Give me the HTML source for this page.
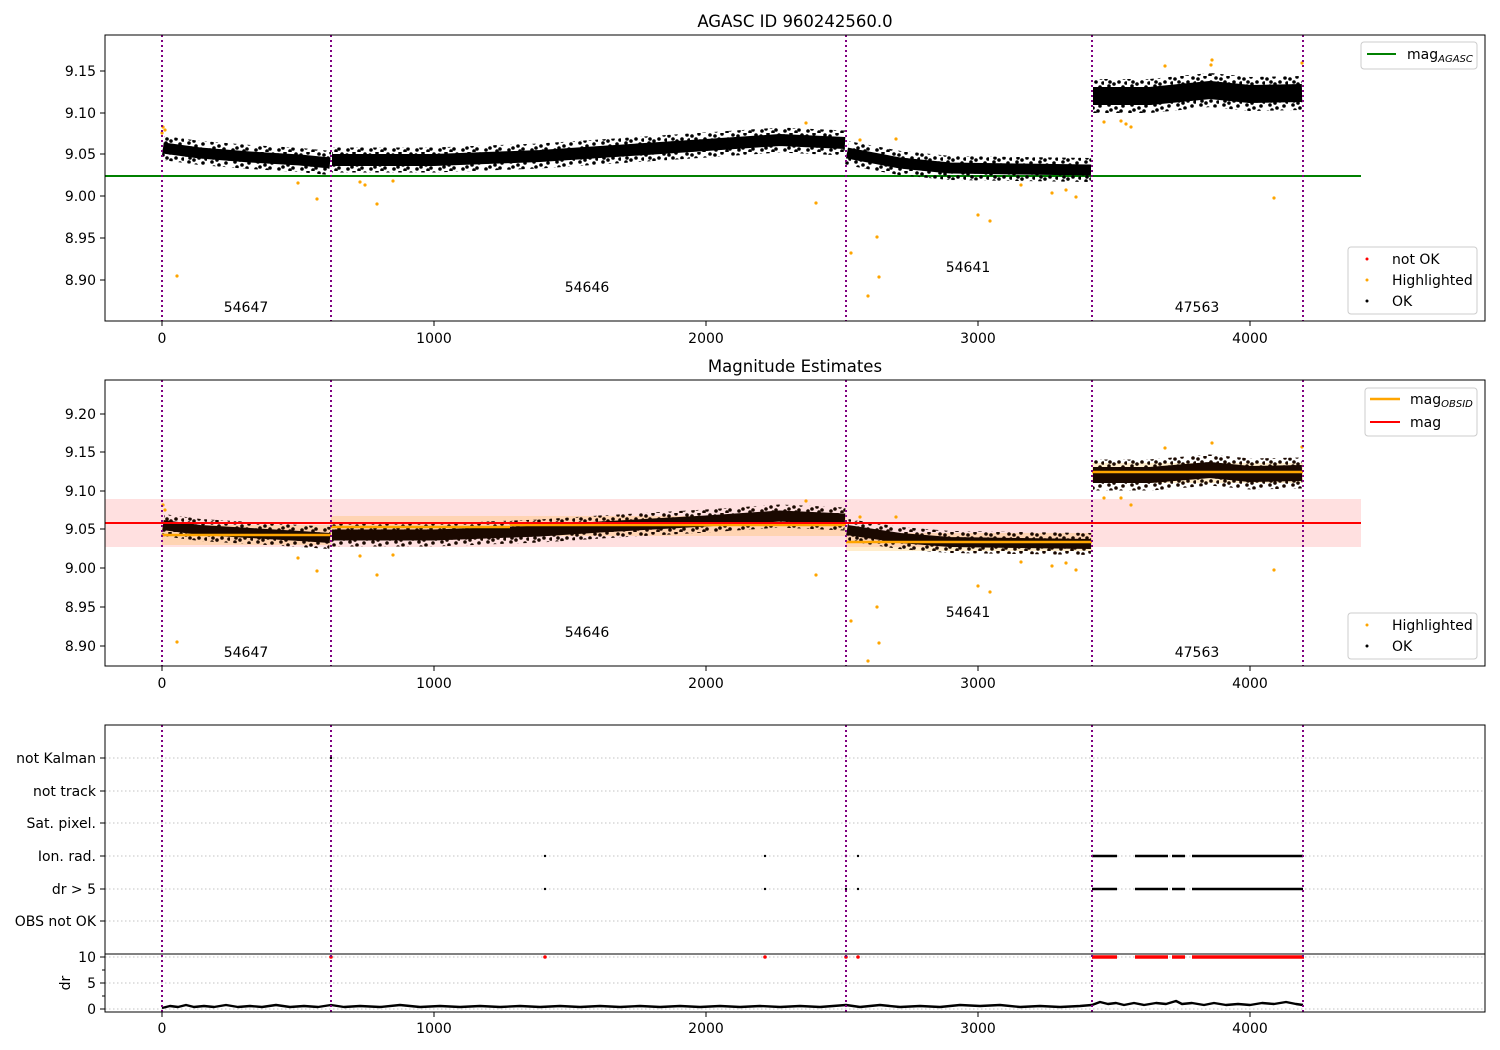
<!DOCTYPE html>
<html><head><meta charset="utf-8"><style>
html,body{margin:0;padding:0;background:#fff;}
svg{display:block;font-family:"DejaVu Sans","Liberation Sans",sans-serif;}
</style></head><body>
<svg width="1500" height="1050" viewBox="0 0 1500 1050" xmlns="http://www.w3.org/2000/svg">
<defs>
<pattern id="dk" width="23" height="19" patternUnits="userSpaceOnUse">
<circle cx="2" cy="3" r="1.8"/><circle cx="9" cy="1" r="1.8"/><circle cx="15" cy="6" r="1.8"/><circle cx="20" cy="2" r="1.8"/><circle cx="5" cy="10" r="1.8"/><circle cx="12" cy="13" r="1.8"/><circle cx="19" cy="11" r="1.8"/><circle cx="3" cy="17" r="1.8"/><circle cx="10" cy="8" r="1.8"/><circle cx="17" cy="16" r="1.8"/><circle cx="22" cy="7" r="1.8"/><circle cx="7" cy="15" r="1.8"/><circle cx="14" cy="18" r="1.8"/><circle cx="6" cy="6" r="1.8"/>
</pattern>
<pattern id="db" width="23" height="19" patternUnits="userSpaceOnUse" fill="#1a0800">
<circle cx="2" cy="3" r="1.8"/><circle cx="9" cy="1" r="1.8"/><circle cx="15" cy="6" r="1.8"/><circle cx="20" cy="2" r="1.8"/><circle cx="5" cy="10" r="1.8"/><circle cx="12" cy="13" r="1.8"/><circle cx="19" cy="11" r="1.8"/><circle cx="3" cy="17" r="1.8"/><circle cx="10" cy="8" r="1.8"/><circle cx="17" cy="16" r="1.8"/><circle cx="22" cy="7" r="1.8"/><circle cx="7" cy="15" r="1.8"/><circle cx="14" cy="18" r="1.8"/><circle cx="6" cy="6" r="1.8"/>
</pattern>
</defs>
<rect width="1500" height="1050" fill="#fff"/>

<!-- ============ PANEL 1 ============ -->
<text x="795" y="27" font-size="16.5" text-anchor="middle">AGASC ID 960242560.0</text>
<line x1="105" y1="176" x2="1361" y2="176" stroke="#008000" stroke-width="2"/>
<g fill="none" stroke="url(#dk)" stroke-linejoin="round" stroke-linecap="butt">
<polyline points="163,148 200,153 250,157 300,160 330,163" stroke-width="24"/>
<polyline points="332,160 434,160 540,156 600,152 706,145 780,140 845,143" stroke-width="25"/>
<polyline points="847,153 900,163 950,168 1020,169 1091,170" stroke-width="24"/>
<polyline points="1093,96 1150,96 1210,90 1250,94 1302,93" stroke-width="34"/>
</g>
<g fill="none" stroke="#000" stroke-linejoin="round" stroke-linecap="butt">
<polyline points="163,148 200,153 250,157 300,160 330,163" stroke-width="11"/>
<polyline points="332,160 434,160 540,156 600,152 706,145 780,140 845,143" stroke-width="12"/>
<polyline points="847,153 900,163 950,168 1020,169 1091,170" stroke-width="11"/>
<polyline points="1093,96 1150,96 1210,90 1250,94 1302,93" stroke-width="18"/>
</g>
<g fill="#ffa500">
<circle cx="163" cy="127" r="1.6"/><circle cx="165" cy="130" r="1.6"/><circle cx="162" cy="133" r="1.6"/><circle cx="177" cy="276" r="1.6"/><circle cx="298" cy="183" r="1.6"/><circle cx="317" cy="199" r="1.6"/><circle cx="360" cy="182" r="1.6"/><circle cx="365" cy="185" r="1.6"/><circle cx="377" cy="204" r="1.6"/><circle cx="393" cy="181" r="1.6"/><circle cx="806" cy="123" r="1.6"/><circle cx="816" cy="203" r="1.6"/><circle cx="851" cy="253" r="1.6"/><circle cx="860" cy="140" r="1.6"/><circle cx="868" cy="296" r="1.6"/><circle cx="877" cy="237" r="1.6"/><circle cx="879" cy="277" r="1.6"/><circle cx="896" cy="139" r="1.6"/><circle cx="978" cy="215" r="1.6"/><circle cx="990" cy="221" r="1.6"/><circle cx="1021" cy="185" r="1.6"/><circle cx="1052" cy="193" r="1.6"/><circle cx="1066" cy="190" r="1.6"/><circle cx="1076" cy="197" r="1.6"/><circle cx="1104" cy="122" r="1.6"/><circle cx="1121" cy="121" r="1.6"/><circle cx="1126" cy="124" r="1.6"/><circle cx="1131" cy="127" r="1.6"/><circle cx="1165" cy="66" r="1.6"/><circle cx="1212" cy="60" r="1.6"/><circle cx="1211" cy="65" r="1.6"/><circle cx="1274" cy="198" r="1.6"/><circle cx="1302" cy="63" r="1.6"/>
</g>
<g stroke="#800080" stroke-width="2" stroke-dasharray="2 3">
<line x1="162" y1="35" x2="162" y2="321"/><line x1="331" y1="35" x2="331" y2="321"/><line x1="846" y1="35" x2="846" y2="321"/><line x1="1092" y1="35" x2="1092" y2="321"/><line x1="1303" y1="35" x2="1303" y2="321"/>
</g>
<g font-size="14" text-anchor="middle">
<text x="246" y="312">54647</text><text x="587" y="292">54646</text><text x="968" y="272">54641</text><text x="1197" y="312">47563</text>
</g>
<rect x="105" y="35" width="1380" height="286" fill="none" stroke="#000" stroke-width="1"/>
<g stroke="#000"><line x1="100" y1="71" x2="105" y2="71"/><line x1="100" y1="113" x2="105" y2="113"/><line x1="100" y1="154" x2="105" y2="154"/><line x1="100" y1="196" x2="105" y2="196"/><line x1="100" y1="238" x2="105" y2="238"/><line x1="100" y1="280" x2="105" y2="280"/>
<line x1="162" y1="321" x2="162" y2="326"/><line x1="434" y1="321" x2="434" y2="326"/><line x1="706" y1="321" x2="706" y2="326"/><line x1="978" y1="321" x2="978" y2="326"/><line x1="1250" y1="321" x2="1250" y2="326"/></g>
<g font-size="14" text-anchor="end"><text x="96" y="76">9.15</text><text x="96" y="118">9.10</text><text x="96" y="159">9.05</text><text x="96" y="201">9.00</text><text x="96" y="243">8.95</text><text x="96" y="285">8.90</text></g>
<g font-size="14" text-anchor="middle"><text x="162" y="343">0</text><text x="434" y="343">1000</text><text x="706" y="343">2000</text><text x="978" y="343">3000</text><text x="1250" y="343">4000</text></g>
<rect x="1361" y="42" width="116" height="27" rx="3" fill="#fff" fill-opacity="0.8" stroke="#ccc"/>
<line x1="1367" y1="54" x2="1396" y2="54" stroke="#008000" stroke-width="2"/>
<text x="1407" y="59" font-size="14">mag<tspan font-size="10" font-style="italic" dy="3">AGASC</tspan></text>
<rect x="1348" y="247" width="129" height="67" rx="3" fill="#fff" fill-opacity="0.8" stroke="#ccc"/>
<circle cx="1367" cy="259" r="1.5" fill="red"/><circle cx="1367" cy="280" r="1.5" fill="#ffa500"/><circle cx="1367" cy="301" r="1.5" fill="#000"/>
<g font-size="14"><text x="1392" y="264">not OK</text><text x="1392" y="285">Highlighted</text><text x="1392" y="306">OK</text></g>

<!-- ============ PANEL 2 ============ -->
<text x="795" y="372" font-size="16.5" text-anchor="middle">Magnitude Estimates</text>
<rect x="105" y="499" width="1256" height="48" fill="#ff0000" fill-opacity="0.12"/>
<g fill="#ffa500" fill-opacity="0.2">
<rect x="162" y="525" width="169" height="20"/><rect x="331" y="516" width="515" height="20"/><rect x="846" y="533" width="246" height="18"/><rect x="1092" y="463" width="211" height="20"/>
</g>
<g fill="none" stroke="url(#db)" stroke-linejoin="round" stroke-linecap="butt">
<polyline points="163,525 200,530 250,533 300,536 330,538" stroke-width="22"/>
<polyline points="332,535 434,535 540,531 600,527 706,521 780,516 845,519" stroke-width="23"/>
<polyline points="847,530 900,538 950,542 1020,543 1091,544" stroke-width="22"/>
<polyline points="1093,475 1150,475 1210,470 1250,474 1302,473" stroke-width="31"/>
</g>
<g fill="none" stroke="#1a0800" stroke-linejoin="round" stroke-linecap="butt">
<polyline points="163,525 200,530 250,533 300,536 330,538" stroke-width="10"/>
<polyline points="332,535 434,535 540,531 600,527 706,521 780,516 845,519" stroke-width="11"/>
<polyline points="847,530 900,538 950,542 1020,543 1091,544" stroke-width="10"/>
<polyline points="1093,475 1150,475 1210,470 1250,474 1302,473" stroke-width="16"/>
</g>
<g stroke="#ffa500" stroke-width="2.5">
<line x1="162" y1="535" x2="331" y2="535"/><line x1="331" y1="527" x2="510" y2="527"/><line x1="510" y1="525" x2="846" y2="525"/><line x1="846" y1="542" x2="1092" y2="542"/><line x1="1092" y1="472" x2="1303" y2="472"/>
</g>
<line x1="105" y1="523" x2="1361" y2="523" stroke="#ff0000" stroke-width="2"/>
<g fill="#ffa500">
<circle cx="163" cy="505" r="1.6"/><circle cx="165" cy="510" r="1.6"/><circle cx="177" cy="642" r="1.6"/><circle cx="298" cy="558" r="1.6"/><circle cx="317" cy="571" r="1.6"/><circle cx="360" cy="556" r="1.6"/><circle cx="377" cy="575" r="1.6"/><circle cx="393" cy="555" r="1.6"/><circle cx="806" cy="501" r="1.6"/><circle cx="816" cy="575" r="1.6"/><circle cx="851" cy="621" r="1.6"/><circle cx="860" cy="517" r="1.6"/><circle cx="868" cy="661" r="1.6"/><circle cx="877" cy="607" r="1.6"/><circle cx="879" cy="643" r="1.6"/><circle cx="896" cy="517" r="1.6"/><circle cx="978" cy="586" r="1.6"/><circle cx="990" cy="592" r="1.6"/><circle cx="1021" cy="562" r="1.6"/><circle cx="1052" cy="566" r="1.6"/><circle cx="1066" cy="563" r="1.6"/><circle cx="1076" cy="570" r="1.6"/><circle cx="1104" cy="498" r="1.6"/><circle cx="1121" cy="498" r="1.6"/><circle cx="1131" cy="505" r="1.6"/><circle cx="1165" cy="448" r="1.6"/><circle cx="1212" cy="443" r="1.6"/><circle cx="1274" cy="570" r="1.6"/><circle cx="1302" cy="447" r="1.6"/>
</g>
<g stroke="#800080" stroke-width="2" stroke-dasharray="2 3">
<line x1="162" y1="380" x2="162" y2="666"/><line x1="331" y1="380" x2="331" y2="666"/><line x1="846" y1="380" x2="846" y2="666"/><line x1="1092" y1="380" x2="1092" y2="666"/><line x1="1303" y1="380" x2="1303" y2="666"/>
</g>
<g font-size="14" text-anchor="middle">
<text x="246" y="657">54647</text><text x="587" y="637">54646</text><text x="968" y="617">54641</text><text x="1197" y="657">47563</text>
</g>
<rect x="105" y="380" width="1380" height="286" fill="none" stroke="#000"/>
<g stroke="#000"><line x1="100" y1="414" x2="105" y2="414"/><line x1="100" y1="452" x2="105" y2="452"/><line x1="100" y1="491" x2="105" y2="491"/><line x1="100" y1="529" x2="105" y2="529"/><line x1="100" y1="568" x2="105" y2="568"/><line x1="100" y1="607" x2="105" y2="607"/><line x1="100" y1="646" x2="105" y2="646"/>
<line x1="162" y1="666" x2="162" y2="671"/><line x1="434" y1="666" x2="434" y2="671"/><line x1="706" y1="666" x2="706" y2="671"/><line x1="978" y1="666" x2="978" y2="671"/><line x1="1250" y1="666" x2="1250" y2="671"/></g>
<g font-size="14" text-anchor="end"><text x="96" y="419">9.20</text><text x="96" y="457">9.15</text><text x="96" y="496">9.10</text><text x="96" y="534">9.05</text><text x="96" y="573">9.00</text><text x="96" y="612">8.95</text><text x="96" y="651">8.90</text></g>
<g font-size="14" text-anchor="middle"><text x="162" y="688">0</text><text x="434" y="688">1000</text><text x="706" y="688">2000</text><text x="978" y="688">3000</text><text x="1250" y="688">4000</text></g>
<rect x="1365" y="388" width="112" height="48" rx="3" fill="#fff" fill-opacity="0.8" stroke="#ccc"/>
<line x1="1370" y1="399" x2="1400" y2="399" stroke="#ffa500" stroke-width="2.5"/>
<line x1="1370" y1="422" x2="1400" y2="422" stroke="#ff0000" stroke-width="2"/>
<text x="1410" y="404" font-size="14">mag<tspan font-size="10" font-style="italic" dy="3">OBSID</tspan></text>
<text x="1410" y="427" font-size="14">mag</text>
<rect x="1348" y="613" width="129" height="46" rx="3" fill="#fff" fill-opacity="0.8" stroke="#ccc"/>
<circle cx="1367" cy="625" r="1.5" fill="#ffa500"/><circle cx="1367" cy="646" r="1.5" fill="#000"/>
<g font-size="14"><text x="1392" y="630">Highlighted</text><text x="1392" y="651">OK</text></g>

<!-- ============ PANEL 3 ============ -->
<g stroke="#b0b0b0" stroke-width="0.8" stroke-dasharray="1.5 2.5">
<line x1="105" y1="758" x2="1485" y2="758"/><line x1="105" y1="791" x2="1485" y2="791"/><line x1="105" y1="823" x2="1485" y2="823"/><line x1="105" y1="856" x2="1485" y2="856"/><line x1="105" y1="889" x2="1485" y2="889"/><line x1="105" y1="921" x2="1485" y2="921"/>
<line x1="105" y1="957" x2="1485" y2="957"/><line x1="105" y1="983" x2="1485" y2="983"/><line x1="105" y1="1009" x2="1485" y2="1009"/>
</g>
<g stroke="#000" stroke-width="2.5">
<line x1="1092" y1="856" x2="1117" y2="856"/><line x1="1135" y1="856" x2="1168" y2="856"/><line x1="1172" y1="856" x2="1185" y2="856"/><line x1="1192" y1="856" x2="1303" y2="856"/>
<line x1="1092" y1="889" x2="1117" y2="889"/><line x1="1135" y1="889" x2="1168" y2="889"/><line x1="1172" y1="889" x2="1185" y2="889"/><line x1="1192" y1="889" x2="1303" y2="889"/>
</g>
<g fill="#000"><circle cx="545" cy="856" r="1.2"/><circle cx="765" cy="856" r="1.2"/><circle cx="846" cy="856" r="1.2"/><circle cx="858" cy="856" r="1.2"/><circle cx="545" cy="889" r="1.2"/><circle cx="765" cy="889" r="1.2"/><circle cx="846" cy="889" r="1.2"/><circle cx="858" cy="889" r="1.2"/><circle cx="331" cy="758" r="1.2"/></g>
<g stroke="#ff0000" stroke-width="3.5">
<line x1="1092" y1="957" x2="1117" y2="957"/><line x1="1135" y1="957" x2="1168" y2="957"/><line x1="1172" y1="957" x2="1185" y2="957"/><line x1="1192" y1="957" x2="1304" y2="957"/>
</g>
<g fill="#ff0000"><circle cx="331" cy="957" r="1.8"/><circle cx="545" cy="957" r="1.8"/><circle cx="765" cy="957" r="1.8"/><circle cx="846" cy="957" r="1.8"/><circle cx="858" cy="957" r="1.8"/></g>
<polyline fill="none" stroke="#000" stroke-width="2.4" stroke-linejoin="round" points="162,1008 170,1006 178,1007 186,1005 194,1007 204,1006 214,1007 226,1005 238,1007 250,1006 262,1007 276,1005 290,1007 304,1006 318,1007 331,1005 344,1007 360,1006 380,1007 400,1005 420,1007 440,1006 460,1007 480,1006 500,1007 520,1006 540,1007 560,1006 580,1007 600,1006 620,1007 640,1006 660,1007 680,1006 700,1007 720,1006 740,1007 760,1006 780,1007 800,1006 820,1007 846,1005 860,1007 880,1005 900,1007 920,1006 940,1007 960,1005 980,1006 1000,1005 1020,1007 1040,1006 1060,1007 1080,1006 1092,1005 1100,1002 1108,1004 1116,1003 1124,1005 1134,1003 1144,1005 1156,1003 1166,1004 1176,1001 1182,1004 1192,1003 1204,1005 1214,1003 1226,1005 1238,1004 1250,1005 1262,1003 1274,1004 1286,1002 1296,1004 1303,1005"/>
<g stroke="#800080" stroke-width="2" stroke-dasharray="2 3">
<line x1="162" y1="725" x2="162" y2="1012"/><line x1="331" y1="725" x2="331" y2="1012"/><line x1="846" y1="725" x2="846" y2="1012"/><line x1="1092" y1="725" x2="1092" y2="1012"/><line x1="1303" y1="725" x2="1303" y2="1012"/>
</g>
<rect x="105" y="725" width="1380" height="287" fill="none" stroke="#000"/>
<line x1="105" y1="954" x2="1485" y2="954" stroke="#000"/>
<g stroke="#000"><line x1="100" y1="758" x2="105" y2="758"/><line x1="100" y1="791" x2="105" y2="791"/><line x1="100" y1="823" x2="105" y2="823"/><line x1="100" y1="856" x2="105" y2="856"/><line x1="100" y1="889" x2="105" y2="889"/><line x1="100" y1="921" x2="105" y2="921"/>
<line x1="100" y1="957" x2="105" y2="957"/><line x1="100" y1="983" x2="105" y2="983"/><line x1="100" y1="1009" x2="105" y2="1009"/><line x1="102" y1="970" x2="105" y2="970"/><line x1="102" y1="996" x2="105" y2="996"/>
<line x1="162" y1="1012" x2="162" y2="1017"/><line x1="434" y1="1012" x2="434" y2="1017"/><line x1="706" y1="1012" x2="706" y2="1017"/><line x1="978" y1="1012" x2="978" y2="1017"/><line x1="1250" y1="1012" x2="1250" y2="1017"/></g>
<g font-size="14" text-anchor="end"><text x="96" y="763">not Kalman</text><text x="96" y="796">not track</text><text x="96" y="828">Sat. pixel.</text><text x="96" y="861">Ion. rad.</text><text x="96" y="894">dr &gt; 5</text><text x="96" y="926">OBS not OK</text><text x="96" y="962">10</text><text x="96" y="988">5</text><text x="96" y="1014">0</text></g>
<text x="0" y="0" font-size="14" text-anchor="middle" transform="translate(70,983) rotate(-90)">dr</text>
<g font-size="14" text-anchor="middle"><text x="162" y="1033">0</text><text x="434" y="1033">1000</text><text x="706" y="1033">2000</text><text x="978" y="1033">3000</text><text x="1250" y="1033">4000</text></g>
</svg>
</body></html>
